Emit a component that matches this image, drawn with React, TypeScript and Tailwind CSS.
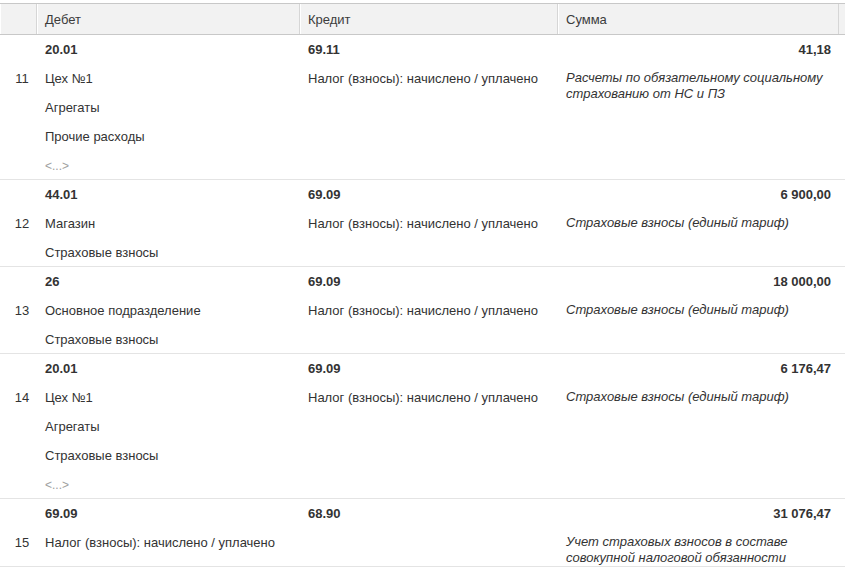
import React from "react";

type Entry = {
  n: number;
  debit: string;
  credit: string;
  sum: string;
  debitLines: string[];
  creditLine: string;
  desc: string[];
  more?: boolean;
};

const TAX = "Налог (взносы): начислено / уплачено";

const entries: Entry[] = [
  {
    n: 11,
    debit: "20.01",
    credit: "69.11",
    sum: "41,18",
    debitLines: ["Цех №1", "Агрегаты", "Прочие расходы"],
    creditLine: TAX,
    desc: ["Расчеты по обязательному социальному", "страхованию от НС и ПЗ"],
    more: true,
  },
  {
    n: 12,
    debit: "44.01",
    credit: "69.09",
    sum: "6 900,00",
    debitLines: ["Магазин", "Страховые взносы"],
    creditLine: TAX,
    desc: ["Страховые взносы (единый тариф)"],
  },
  {
    n: 13,
    debit: "26",
    credit: "69.09",
    sum: "18 000,00",
    debitLines: ["Основное подразделение", "Страховые взносы"],
    creditLine: TAX,
    desc: ["Страховые взносы (единый тариф)"],
  },
  {
    n: 14,
    debit: "20.01",
    credit: "69.09",
    sum: "6 176,47",
    debitLines: ["Цех №1", "Агрегаты", "Страховые взносы"],
    creditLine: TAX,
    desc: ["Страховые взносы (единый тариф)"],
    more: true,
  },
  {
    n: 15,
    debit: "69.09",
    credit: "68.90",
    sum: "31 076,47",
    debitLines: [TAX],
    creditLine: "",
    desc: ["Учет страховых взносов в составе", "совокупной налоговой обязанности"],
  },
];

const cols = "grid grid-cols-[37px_263px_258px_281px_1fr]";

function Header() {
  const cell = "h-[30px] flex items-center px-2 pt-px border-r border-[#d6d6d6] shadow-[inset_1px_0_0_#ffffff]";
  return (
    <div className={`${cols} mt-[3px] border-t border-b border-[#c8c8c8] bg-[#f2f2f2] text-[#3c3c3c]`}>
      <div className={cell} />
      <div className={cell}>Дебет</div>
      <div className={cell}>Кредит</div>
      <div className={cell}>Сумма</div>
      <div className="h-[30px]" />
    </div>
  );
}

function Row({ e }: { e: Entry }) {
  const line = "h-[29px] flex items-center pt-[2px]";
  return (
    <div className={`${cols} border-b border-[#e4e4e4] text-[#333333]`}>
      {/* first line: account codes and amount */}
      <div className="h-[28px]" />
      <div className="h-[28px] flex items-center pt-[2px] px-2 font-bold">{e.debit}</div>
      <div className="h-[28px] flex items-center pt-[2px] px-2 font-bold">{e.credit}</div>
      <div className="h-[28px] flex items-center pt-[2px] justify-end px-2 font-bold">{e.sum}</div>
      <div />

      <div className={`${line} justify-center pl-[7px]`}>{e.n}</div>
      <div className="px-2">
        {e.debitLines.map((l, i) => (
          <div key={i} className={line}>
            {l}
          </div>
        ))}
        {e.more && <div className={`${line} text-[#a0a0a0] text-[12px]`}>&lt;...&gt;</div>}
      </div>
      <div className="px-2">
        {e.creditLine && <div className={line}>{e.creditLine}</div>}
      </div>
      <div className="px-2 pt-[7px] italic leading-[16px]">
        {e.desc.map((d, i) => (
          <div key={i}>{d}</div>
        ))}
      </div>
      <div />
    </div>
  );
}

export default function App() {
  return (
    <div className="w-[845px] h-[574px] overflow-hidden bg-white text-[13px] font-['Liberation_Sans',Arial,sans-serif]">
      <Header />
      {entries.map((e) => (
        <Row key={e.n} e={e} />
      ))}
    </div>
  );
}
